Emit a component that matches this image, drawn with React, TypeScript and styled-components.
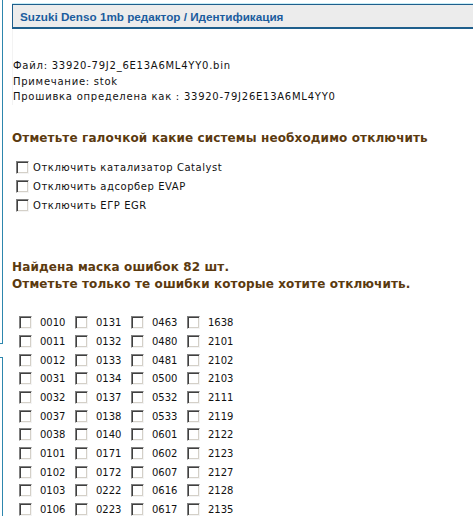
import React from "react";
import styled, { createGlobalStyle } from "styled-components";

const Global = createGlobalStyle`
  html, body { margin: 0; padding: 0; background: #ffffff; }
  body { font-family: "DejaVu Sans", Verdana, sans-serif; font-size: 10px; color: #111; }
`;

const Page = styled.div`
  display: flex;
  min-height: 516px;
  overflow: hidden;
`;

const Sidebar = styled.div`
  width: 3px;
  flex: none;
  display: flex;
  flex-direction: column;
  gap: 13px;
`;

const SideBox = styled.div<{ $grow?: boolean; $h?: number }>`
  box-sizing: border-box;
  border-right: 1px solid #2d86ad;
  ${(p) => (p.$grow ? "flex: 1; border-top: 1px solid #2d86ad;" : `height: ${p.$h}px; border-bottom: 1px solid #2d86ad;`)}
`;

const Main = styled.div`
  flex: 1;
  margin-left: 9px;
  padding-top: 4px;
`;

const Header = styled.div`
  box-sizing: border-box;
  height: 25px;
  display: flex;
  align-items: center;
  padding-left: 7px;
  background: #ececec;
  border: 1px solid #1f5f8c;
  border-bottom-width: 2px;
  border-right: none;
  box-shadow: 0 -1px 0 #c8eef8;
  font-family: "Liberation Sans", Arial, sans-serif;
  font-weight: bold;
  font-size: 11.7px;
  color: #1b5c9e;
`;

const Panel = styled.div`
  border-left: 1px solid #f3f3f3;
`;

const Info = styled.div`
  padding-top: 29px;
  line-height: 15.5px;
  letter-spacing: 0.75px;
`;

const Heading = styled.div<{ $mt: number }>`
  margin-top: ${(p) => p.$mt}px;
  font-family: "DejaVu Sans", Verdana, sans-serif;
  font-weight: bold;
  font-size: 12px;
  line-height: 17px;
  letter-spacing: 0.12px;
  color: #5b3a0f;
`;

const OptionList = styled.div`
  margin-top: 11px;
  padding-left: 4px;
  display: flex;
  flex-direction: column;
`;

const Option = styled.label`
  height: 19px;
  display: flex;
  align-items: center;
  gap: 4px;
  letter-spacing: 0.55px;
`;

const Box = styled.span`
  box-sizing: border-box;
  display: inline-block;
  flex: none;
  width: 13px;
  height: 13px;
  background: #fff;
  border: 1px solid;
  border-color: #808080 #f4f4f4 #f4f4f4 #808080;
  box-shadow: inset 1px 1px 0 #404040, inset -1px -1px 0 #d4d0c8;
`;

const CodeGrid = styled.div`
  margin-top: 21px;
  margin-left: 7px;
  display: grid;
  grid-template-columns: repeat(4, 56px);
  grid-auto-rows: 18.67px;
`;

const Code = styled.label`
  display: flex;
  align-items: center;
  gap: 8px;
`;

const options = ["Отключить катализатор Catalyst", "Отключить адсорбер EVAP", "Отключить ЕГР EGR"];

const codes = [
  ["0010", "0131", "0463", "1638"],
  ["0011", "0132", "0480", "2101"],
  ["0012", "0133", "0481", "2102"],
  ["0031", "0134", "0500", "2103"],
  ["0032", "0137", "0532", "2111"],
  ["0037", "0138", "0533", "2119"],
  ["0038", "0140", "0601", "2122"],
  ["0101", "0171", "0602", "2123"],
  ["0102", "0172", "0607", "2127"],
  ["0103", "0222", "0616", "2128"],
  ["0106", "0223", "0617", "2135"],
];

export default function App() {
  return (
    <>
      <Global />
      <Page>
        <Sidebar>
          <SideBox $h={344} />
          <SideBox $grow />
        </Sidebar>
        <Main>
          <Header>Suzuki Denso 1mb редактор / Идентификация</Header>
          <Panel>
            <Info>
              <div>Файл: 33920-79J2_6E13A6ML4YY0.bin</div>
              <div>Примечание: stok</div>
              <div>Прошивка определена как : 33920-79J26E13A6ML4YY0</div>
            </Info>
          </Panel>
          <Heading $mt={25}>Отметьте галочкой какие системы необходимо отключить</Heading>
          <OptionList>
            {options.map((o) => (
              <Option key={o}>
                <Box />
                {o}
              </Option>
            ))}
          </OptionList>
          <Heading $mt={44}>
            Найдена маска ошибок 82 шт.
            <br />
            Отметьте только те ошибки которые хотите отключить.
          </Heading>
          <CodeGrid>
            {codes.flat().map((c, i) => (
              <Code key={i}>
                <Box />
                {c}
              </Code>
            ))}
          </CodeGrid>
        </Main>
      </Page>
    </>
  );
}
